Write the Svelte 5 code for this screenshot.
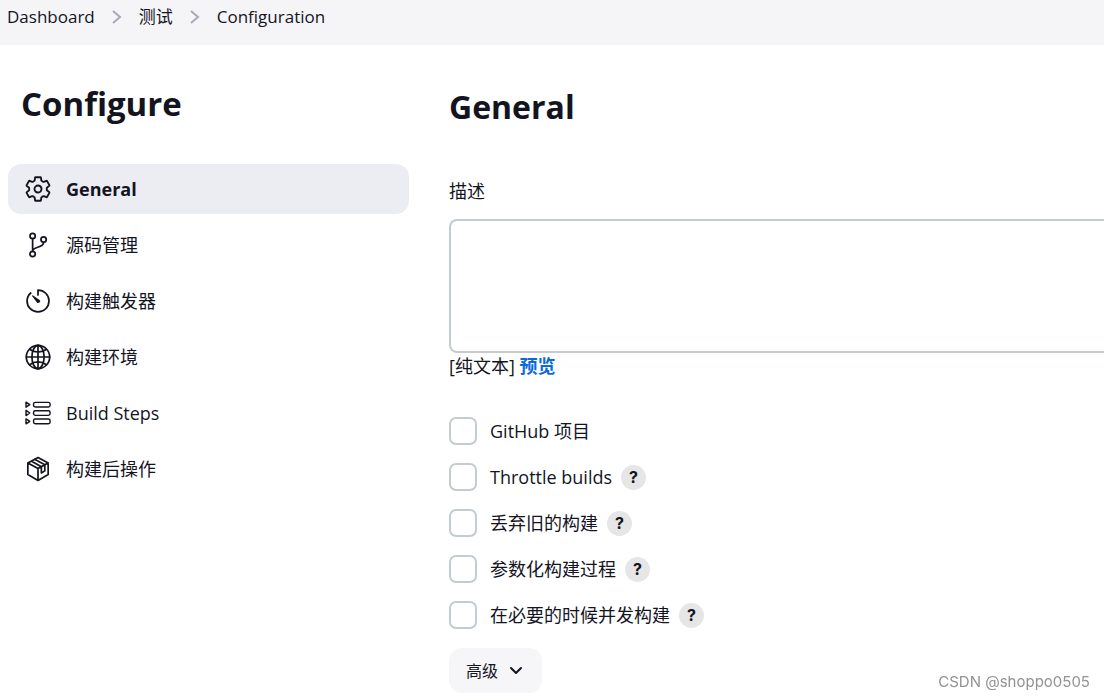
<script>
    const crumbs = ['Dashboard', '测试', 'Configuration'];

    const sections = [
        { id: 'general', label: 'General', icon: 'gear' },
        { id: 'scm', label: '源码管理', icon: 'branch' },
        { id: 'triggers', label: '构建触发器', icon: 'timer' },
        { id: 'environment', label: '构建环境', icon: 'globe' },
        { id: 'steps', label: 'Build Steps', icon: 'list' },
        { id: 'post', label: '构建后操作', icon: 'cube' }
    ];

    const options = [
        { id: 'github', label: 'GitHub 项目', help: false },
        { id: 'throttle', label: 'Throttle builds', help: true },
        { id: 'discard', label: '丢弃旧的构建', help: true },
        { id: 'params', label: '参数化构建过程', help: true },
        { id: 'concurrent', label: '在必要的时候并发构建', help: true }
    ];

    let active = $state('general');
    let description = $state('');
    let checked = $state({});
</script>

<nav class="breadcrumbs" aria-label="Breadcrumb">
    {#each crumbs as crumb, i}
        {#if i > 0}
            <svg class="crumb-sep" viewBox="0 0 10 16" aria-hidden="true">
                <path d="M1 2l7 6-7 6" />
            </svg>
        {/if}
        <a href="#{i}">{crumb}</a>
    {/each}
</nav>

<div class="page">
    <aside class="sidebar">
        <h1>Configure</h1>
        <nav class="tasks">
            {#each sections as s}
                <a href="#{s.id}" class="task" class:active={active === s.id} onclick={() => (active = s.id)}>
                    <svg class="icon" viewBox={s.icon === 'gear' ? '20 20 472 472' : '0 0 512 512'} aria-hidden="true">
                        {#if s.icon === 'gear'}
                            <path d="M262.29 192.31a64 64 0 1057.4 57.4 64.13 64.13 0 00-57.4-57.4zM416.39 256a154.34 154.34 0 01-1.53 20.79l45.21 35.46a10.81 10.81 0 012.45 13.75l-42.77 74a10.81 10.81 0 01-13.14 4.59l-44.9-18.08a16.11 16.11 0 00-15.17 1.75A164.48 164.48 0 01325 400.8a15.94 15.94 0 00-8.82 12.14l-6.73 47.89a11.08 11.08 0 01-10.68 9.17h-85.54a11.11 11.11 0 01-10.69-8.87l-6.72-47.82a16.07 16.07 0 00-9-12.22 155.3 155.3 0 01-21.46-12.57 16 16 0 00-15.11-1.71l-44.89 18.07a10.81 10.81 0 01-13.14-4.58l-42.77-74a10.8 10.8 0 012.45-13.75l38.21-30a16.05 16.05 0 006-14.08c-.36-4.17-.58-8.33-.58-12.5s.21-8.27.58-12.35a16 16 0 00-6.07-13.94l-38.19-30A10.81 10.81 0 0149.48 186l42.77-74a10.81 10.81 0 0113.14-4.59l44.9 18.08a16.11 16.11 0 0015.17-1.75A164.48 164.48 0 01187 111.2a15.94 15.94 0 008.82-12.14l6.73-47.89A11.08 11.08 0 01213.23 42h85.54a11.11 11.11 0 0110.69 8.87l6.72 47.82a16.07 16.07 0 009 12.22 155.3 155.3 0 0121.46 12.57 16 16 0 0015.11 1.71l44.89-18.07a10.81 10.81 0 0113.14 4.58l42.77 74a10.8 10.8 0 01-2.45 13.75l-38.21 30a16.05 16.05 0 00-6.05 14.08c.33 4.14.55 8.3.55 12.47z" />
                        {:else if s.icon === 'branch'}
                            <circle cx="150" cy="80" r="52" />
                            <circle cx="150" cy="432" r="52" />
                            <circle cx="366" cy="150" r="52" />
                            <path d="M150 132v248M366 202c0 128-216 70-216 178" />
                        {:else if s.icon === 'timer'}
                            <path d="M112.9 98.1A216 216 0 0040 256c0 118 95 216 216 216 119.300 0 216-96.700 216-216S375.300 40 256 40v96" />
                            <path class="solid" d="M280.400 230.900L158.700 145.400c-10-7-22 5-15 15l87.200 120a35.500 35.500 0 0050 7.500 35.500 35.500 0 00-.5-57z" />
                        {:else if s.icon === 'globe'}
                            <circle cx="256" cy="256" r="230" />
                            <ellipse cx="256" cy="256" rx="120" ry="230" />
                            <path d="M256 26v460M26 256h460M98 108c43 32 97 50 158 50s115-18 158-50M98 404c43-32 97-50 158-50s115 18 158 50" />
                        {:else if s.icon === 'list'}
                            <g class="thin">
                                <rect x="168" y="46" width="326" height="92" rx="34" />
                                <rect x="168" y="210" width="326" height="92" rx="34" />
                                <rect x="168" y="374" width="326" height="92" rx="34" />
                                <path d="M20 42v100l74-50zM20 206v100l74-50zM20 370v100l74-50z" />
                            </g>
                        {:else}
                            <path d="M256 30L456 136v230L256 482 56 366V136zM56 136l200 112 200-112M256 248v234M122 100l200 112M190 64l200 109v120l-68 40V212" />
                        {/if}
                    </svg>
                    <span>{s.label}</span>
                </a>
            {/each}
        </nav>
    </aside>

    <main class="content">
        <h2>General</h2>

        <label class="field-label" for="description">描述</label>
        <textarea id="description" bind:value={description}></textarea>
        <div class="markup">[纯文本] <a href="#preview">预览</a></div>

        <div class="options">
            {#each options as o}
                <div class="option">
                    <input type="checkbox" id={o.id} bind:checked={checked[o.id]} />
                    <label for={o.id}>{o.label}</label>
                    {#if o.help}
                        <button class="help" type="button" aria-label="Help: {o.label}">?</button>
                    {/if}
                </div>
            {/each}
        </div>

        <button class="advanced" type="button">
            高级
            <svg viewBox="0 0 14 14" aria-hidden="true"><path d="M2 4l5 5 5-5" /></svg>
        </button>
    </main>
</div>

<div class="watermark">CSDN @shoppo0505</div>

<style>
    :global(body) {
        background: #fff;
        color: #14141f;
        font-family: "Open Sans", "Noto Sans CJK SC", sans-serif;
        font-size: 18px;
        line-height: 26px;
        overflow-x: hidden;
    }

    .breadcrumbs {
        display: flex;
        align-items: center;
        gap: 17px;
        padding: 4px 7px 15px;
        background: #f5f5f8;
        font-size: 17px;
    }

    .breadcrumbs a {
        color: inherit;
        text-decoration: none;
    }

    .crumb-sep {
        width: 10px;
        height: 16px;
        fill: none;
        stroke: #a9a9b8;
        stroke-width: 2;
    }

    .page {
        display: grid;
        grid-template-columns: 401px minmax(0, 1fr);
        column-gap: 40px;
        padding-left: 8px;
    }

    h1,
    h2 {
        margin: 0;
        line-height: 40px;
        font-weight: 700;
    }

    h1 {
        padding: 39px 13px 40px;
        font-size: 33px;
    }

    h2 {
        padding: 42px 0 51px;
        font-size: 32px;
    }

    .tasks {
        display: flex;
        flex-direction: column;
        gap: 6px;
    }

    .task {
        display: flex;
        align-items: center;
        gap: 15px;
        height: 50px;
        padding: 0 17px 1px;
        box-sizing: border-box;
        border-radius: 13px;
        color: inherit;
        text-decoration: none;
    }

    .task.active {
        background: #ecedf3;
        font-weight: 700;
    }

    .icon {
        width: 26px;
        height: 26px;
        fill: none;
        stroke: currentColor;
        stroke-width: 34;
        stroke-linecap: round;
        stroke-linejoin: round;
    }

    .thin {
        stroke-width: 28;
    }

    .solid {
        fill: currentColor;
        stroke: none;
    }

    .field-label {
        display: block;
        margin-bottom: 15px;
    }

    textarea {
        display: block;
        width: 100%;
        height: 134px;
        box-sizing: border-box;
        padding: 8px 12px;
        border: 2px solid #c3ccd1;
        border-right: none;
        border-radius: 8px 0 0 8px;
        background: #fff;
        font: inherit;
        resize: none;
    }

    .markup a {
        color: #0b6adb;
        font-weight: 700;
        text-decoration: none;
    }

    .options {
        display: flex;
        flex-direction: column;
        gap: 18px;
        padding: 38px 0 19px;
    }

    .option {
        display: flex;
        align-items: center;
        height: 28px;
    }

    .option input {
        appearance: none;
        width: 28px;
        height: 28px;
        margin: 0 13px 0 0;
        border: 2px solid #c3ccd1;
        border-radius: 7px;
        background: #fff;
    }

    .option input:checked {
        background: #0b6adb;
    }

    .help {
        width: 25px;
        height: 25px;
        margin-left: 9px;
        padding: 0;
        border: none;
        border-radius: 50%;
        background: #e6e6e6;
        color: #14141f;
        font-family: Inter, sans-serif;
        font-size: 16px;
        font-weight: 700;
        line-height: 25px;
    }

    .advanced {
        display: flex;
        align-items: center;
        gap: 11px;
        height: 45px;
        padding: 0 19px 0 17px;
        border: none;
        border-radius: 13px;
        background: #f6f6f9;
        color: #14141f;
        font: inherit;
        font-size: 16px;
    }

    .advanced svg {
        width: 14px;
        height: 14px;
        fill: none;
        stroke: currentColor;
        stroke-width: 2;
        stroke-linecap: round;
        stroke-linejoin: round;
    }

    .watermark {
        position: fixed;
        right: 14px;
        bottom: 4px;
        color: #929292;
        font-family: Inter, sans-serif;
        font-size: 15px;
    }
</style>
